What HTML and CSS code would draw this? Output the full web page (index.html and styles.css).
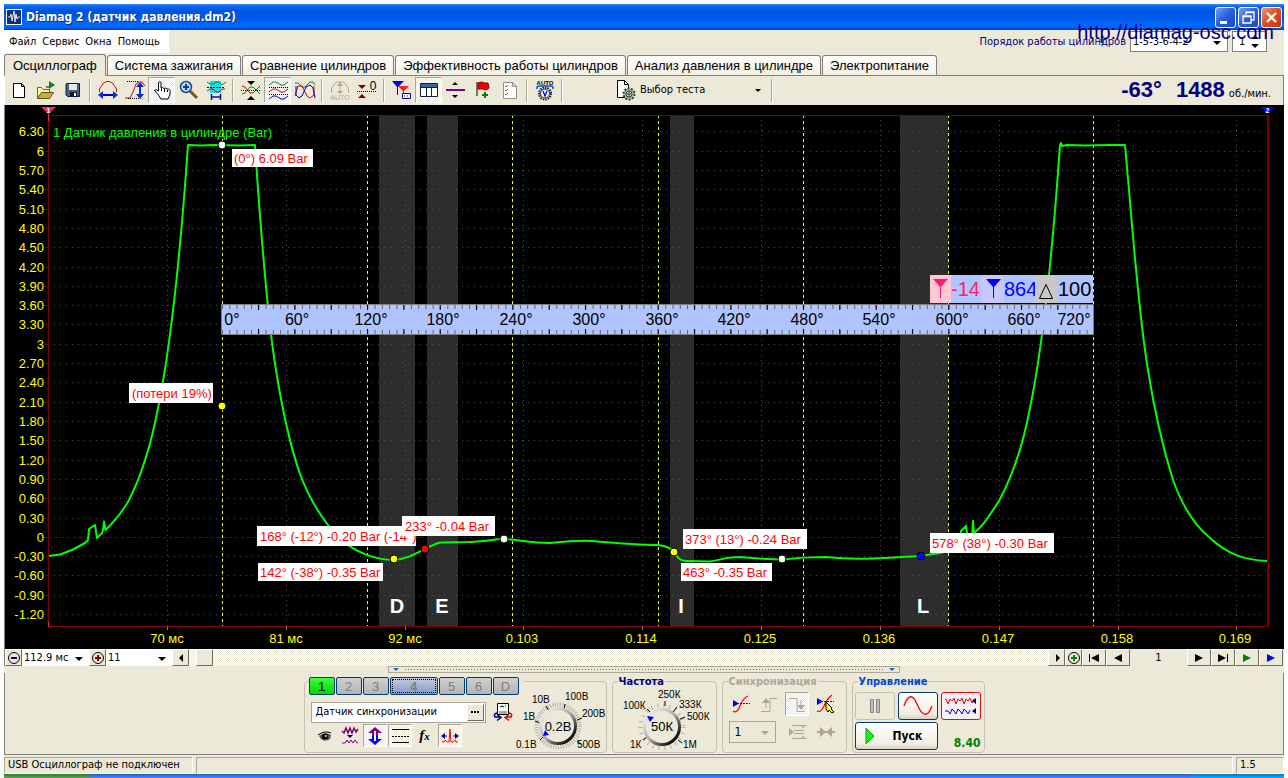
FILE: index.html
```html
<!DOCTYPE html>
<html lang="ru">
<head>
<meta charset="utf-8">
<title>Diamag 2</title>
<link rel="stylesheet" href="styles.css">
</head>
<body>
<div class="window">
  <header class="titlebar">
    <svg class="app-icon" width="16" height="16" viewBox="0 0 16 16"><rect x=".5" y=".5" width="15" height="15" fill="#10307c" stroke="#fff"/><path d="M2 8h2l1-3 1 7 2-10 1 11 1-8 1 5 1-2h2" fill="none" stroke="#dbe8ff"/></svg>
    <h1 class="title">Diamag 2 (датчик давления.dm2)</h1>
    <div class="win-buttons">
      <button class="win-btn" aria-label="Свернуть"><svg width="19" height="19" viewBox="0 0 19 19"><path d="M4 13h7v3H4z" fill="#fff"/></svg></button>
      <button class="win-btn" aria-label="Восстановить"><svg width="19" height="19" viewBox="0 0 19 19"><path d="M7 7V4h8v8h-3M7 4.500h8M4 8h8v7H4zM4 8.500h8" fill="none" stroke="#fff" stroke-width="1.300"/></svg></button>
      <button class="win-btn close" aria-label="Закрыть"><svg width="19" height="19" viewBox="0 0 19 19"><path d="M5 5l9 9M14 5l-9 9" stroke="#fff" stroke-width="2.300"/></svg></button>
    </div>
  </header>

  <div class="menu-row">
    <nav class="menu">
      <button>Файл</button><button>Сервис</button><button>Окна</button><button>Помощь</button>
    </nav>
    <div class="order">
      <label for="order">Порядок работы цилиндров</label>
      <span class="drop boxed"><select id="order" class="order-select"><option>1-5-3-6-4-2</option></select></span>
      <span class="spin"><input type="text" value="1" aria-label="Номер цилиндра"><svg width="9" height="16" viewBox="0 0 9 16"><path d="M0 5l4-4 4 4zM0 10h8l-4 4z"/></svg></span>
    </div>
    <a class="site" href="#">http://diamag-osc.com</a>
  </div>

  <div class="tabs" role="tablist">
    <button class="tab active" role="tab">Осциллограф</button>
    <button class="tab" role="tab">Система зажигания</button>
    <button class="tab" role="tab">Сравнение цилиндров</button>
    <button class="tab" role="tab">Эффективность работы цилиндров</button>
    <button class="tab" role="tab">Анализ давления в цилиндре</button>
    <button class="tab" role="tab">Электропитание</button>
  </div>

  <div class="toolbar">
    <button class="tool" aria-label="Новый"><svg viewBox="0 0 22 22"><path d="M5.500 4.500h8l3 3v11h-11zM13.500 4.500v3h3" fill="#fff" stroke="#000"/></svg></button>
    <button class="tool" aria-label="Открыть"><svg viewBox="0 0 22 22"><path d="M2.500 19.500v-11h4l2 2h6v3" fill="#fff7a0" stroke="#6a6414"/><path d="M2.500 19.500l4-6h12l-4 6z" fill="#c0b040" stroke="#5a5410"/><path d="M11 8h4" stroke="#000"/><path d="M14 2l6 4-6 4z" fill="#008a18"/></svg></button>
    <button class="tool" aria-label="Сохранить"><svg viewBox="0 0 22 22"><path d="M5 4.500h12.500v13h-12l-1.500-1.500v-11z" fill="#50607e" stroke="#101c40"/><path d="M7 5h8v6H7z" fill="#dce8f8"/><path d="M8 13h7v4H8z" fill="#101828"/><path d="M12 14h2v3h-2z" fill="#fff"/></svg></button>
    <i class="sep"></i>
    <button class="tool" aria-label="Масштаб по горизонтали"><svg viewBox="0 0 22 22"><path d="M2.500 13V10l4-6 3-1.500h3l3 1.500 4 6v3" fill="none" stroke="#e00000"/><path d="M3 16h16" stroke="#0000d0" stroke-width="2"/><path d="M1 16l5-4v8zM21 16l-5-4v8z" fill="#0030e0"/></svg></button>
    <button class="tool" aria-label="Масштаб по вертикали"><svg viewBox="0 0 22 22"><path d="M1 19h5l3-6 3-8 3-2h3l3 4" fill="none" stroke="#e00000"/><path d="M3 2.500h11M4 19.500h11" stroke="#000" stroke-dasharray="1 1"/><path d="M16 6v11" stroke="#0030e0" stroke-width="2"/><path d="M16 3l4 5h-8zM16 20l4-5h-8z" fill="#0030e0"/></svg></button>
    <button class="tool on" aria-label="Рука"><svg viewBox="0 0 22 22"><path d="M7.500 12V3.500q1.500-2 2.500 0V9q1.500-1.500 3 .5q1.500-1 3 .5q2-.5 3 1.500v4l-2 4.500h-7l-2.500-4-4-4.500q1-2 4 .5z" fill="#fff" stroke="#000"/><path d="M10.500 9v3M13.500 10v3M16.500 11v2" stroke="#000"/></svg></button>
    <button class="tool" aria-label="Лупа"><svg viewBox="0 0 22 22"><path d="M12 12l7 7" stroke="#80541c" stroke-width="3"/><circle cx="8" cy="8" r="5.500" fill="#b8d8f8" stroke="#204888" stroke-width="1.500"/><path d="M5 8h6M8 5v6" stroke="#123c80" stroke-width="2"/></svg></button>
    <button class="tool" aria-label="Измерение"><svg viewBox="0 0 22 22"><path d="M5 2h11v12H5z" fill="#00e8f0"/><path d="M2 3l3 2h3l3-2h3l3 3 4-3" fill="none" stroke="#008820"/><path d="M2 8.500h18" stroke="#000" stroke-dasharray="2 1"/><path d="M2 12l3-2h3l3 3h3l3-3h3" fill="none" stroke="#e00000"/><path d="M6.500 15v6M15.500 15v6M7 18h8" stroke="#0010a0" stroke-width="1.500"/></svg></button>
    <i class="sep"></i>
    <button class="tool" aria-label="Совместить"><svg viewBox="0 0 22 22"><path d="M2 15l3-1 5-6h3l7 7" fill="none" stroke="#008820"/><path d="M2 7l3 1 5 6h3l7-7" fill="none" stroke="#e00000"/><path d="M1 11.500h20" stroke="#000" stroke-dasharray="1 1"/><path d="M7 2h8l-4 4zM7 21h8l-4-4z"/></svg></button>
    <button class="tool on" aria-label="Разнести"><svg viewBox="0 0 22 22"><path d="M2 6l4-3h3l5 3h3l4-3" fill="none" stroke="#008820"/><path d="M2 13l4-3h3l5 3h3l4-3" fill="none" stroke="#e00000"/><path d="M2 20l4-3h3l5 3h3l4-3" fill="none" stroke="#0000e0"/><path d="M2 8.500h19M2 15.500h19" stroke="#000" stroke-dasharray="1 1"/></svg></button>
    <button class="tool" aria-label="Наложить"><svg viewBox="0 0 22 22"><path d="M1 4h3l4 4h3l5-5h3l2 3" fill="none" stroke="#008820"/><path d="M1 17l3-10h4l5 10 3 2 4-3V7" fill="none" stroke="#e00000"/><path d="M2 7v9l3 3 3-2 4-9 4-2 3 3 2 10" fill="none" stroke="#0000e0"/></svg></button>
    <i class="sep"></i>
    <button class="tool" aria-label="Авто масштаб" disabled><svg viewBox="0 0 22 22"><path d="M2.500 14V9l5-6h7l5 6v5M11 5v9" fill="none" stroke="#aca899"/><path d="M11 3l3 4H8zM11 15l3-3H8z" fill="#aca899"/><text x="11" y="21" font-size="7" text-anchor="middle" fill="#aca899">AUTO</text></svg></button>
    <button class="tool" aria-label="Обнулить"><svg viewBox="0 0 22 22"><path d="M2 6h8L6 10zM2 19h8l-4-4z" fill="#800000"/><path d="M1 12.500h20" stroke="#000" stroke-dasharray="1 1"/><text x="17" y="11" font-size="12" text-anchor="middle">0</text></svg></button>
    <i class="sep"></i>
    <button class="tool" aria-label="Маркеры"><svg viewBox="0 0 22 22"><path d="M1 2h12L7 8v8H6V8z" fill="#0000f0"/><path d="M7 7h11l-5 5v6h-1v-6z" fill="#ff2020"/><path d="M11.500 14.500h8v5h-8z" fill="#fff" stroke="#0000a0"/><path d="M13 17h1M16 17h1" stroke="#000"/></svg></button>
    <button class="tool on" aria-label="Таблица"><svg viewBox="0 0 22 22"><path d="M2.500 4.500h17v13h-17zM8.500 5v12M13.500 5v12" fill="#fff" stroke="#10204c"/><path d="M3 5h16v3H3z" fill="#4060a8"/><path d="M3 8.500h16" stroke="#10204c"/></svg></button>
    <button class="tool" aria-label="Линейка"><svg viewBox="0 0 22 22"><path d="M1 11h19" stroke="#800080" stroke-width="2"/><path d="M7 6h6l-3-3zM7 16h6l-3 3z"/></svg></button>
    <button class="tool" aria-label="Добавить метку"><svg viewBox="0 0 22 22"><path d="M5 3v14" stroke="#000"/><path d="M6 4l4-1 2 1h4l1 5-3 2-3-1H6z" fill="#f00000" stroke="#800000"/><path d="M13 13v6M10 16h6" stroke="#008000" stroke-width="2"/></svg></button>
    <button class="tool" aria-label="Отчёт"><svg viewBox="0 0 22 22"><path d="M4.500 3.500h9l4 4v12h-13zM13.500 3.500v4h4" fill="#fff" stroke="#909090"/><path d="M6 7l1 1 2-2M6 11l1 1 2-2M6 15l1 1 2-2" fill="none" stroke="#707070"/></svg></button>
    <i class="sep"></i>
    <button class="tool" aria-label="Авто напряжение"><svg viewBox="0 0 22 22"><text x="11" y="6" font-size="6" font-weight="bold" text-anchor="middle">AUTO</text><path d="M3 10V8.500q0-1.500 3-1.500h10q3 0 3 1.500V10" fill="none" stroke="#0050e0" stroke-width="1.500"/><circle cx="11" cy="14.500" r="6" fill="none" stroke="#222" stroke-width="2" stroke-dasharray="1.500 1"/><circle cx="11" cy="14.500" r="4.500" fill="#fff" stroke="#222"/><path d="M9 12l2 5 2-5" fill="none" stroke="#0000f0" stroke-width="1.300"/></svg></button>
    <i class="sep"></i>
    <button class="test-select">
      <svg width="22" height="22" viewBox="0 0 22 22"><path d="M3.500 1.500h7l4 4v13h-11zM10.500 1.500v4h4" fill="#fff" stroke="#000"/><circle cx="15" cy="15" r="5.500" fill="#a8c0a8" stroke="#304030" stroke-width="2" stroke-dasharray="2 1.400"/><circle cx="15" cy="15" r="3" fill="#dfe8df" stroke="#203020"/><path d="M13 15h4M15 13v4" stroke="#204020"/></svg>
      <span>Выбор теста</span><i class="arrow"></i>
    </button>
    <i class="sep"></i>
    <output class="readout"><b>-63°</b><b>1488</b><span>об./мин.</span></output>
  </div>

  <svg class="chart" viewBox="5 105 1279 544" role="img" aria-label="Датчик давления в цилиндре">
    <g fill="#2d2d2d"><path d="M379 116h36v511h-36zM427 116h31v511h-31zM670 116h24v511h-24zM900 116h48v511h-48z"/></g>
    <g class="grid-h">
      <path d="M54 131.500H1266M54 151.500H1266M54 170.500H1266M54 189.500H1266M54 209.500H1266M54 228.500H1266M54 247.500H1266M54 267.500H1266M54 286.500H1266M54 305.500H1266M54 324.500H1266M54 344.500H1266M54 363.500H1266M54 382.500H1266M54 402.500H1266M54 421.500H1266M54 440.500H1266M54 460.500H1266M54 479.500H1266M54 498.500H1266M54 518.500H1266M54 556.500H1266M54 575.500H1266M54 595.500H1266M54 614.500H1266"/>
    </g>
    <path class="grid-v" d="M167.500 120V626M286.500 120V626M405.500 120V626M523.500 120V626M642.500 120V626M761.500 120V626M880.500 120V626M999.500 120V626M1118.500 120V626M1236.500 120V626"/>
    <path class="zero" d="M49 537.500H1267"/>
    <path class="phase" d="M222.500 115V627M367.500 115V627M512.500 115V627M658.500 115V627M803.500 115V627M948.500 115V627M1093.500 115V627"/>
    <path class="frame" d="M48.500 115.500H1268.500V626.500H48.500zM45 131.500h3M45 151.500h3M45 170.500h3M45 189.500h3M45 209.500h3M45 228.500h3M45 247.500h3M45 267.500h3M45 286.500h3M45 305.500h3M45 324.500h3M45 344.500h3M45 363.500h3M45 382.500h3M45 402.500h3M45 421.500h3M45 440.500h3M45 460.500h3M45 479.500h3M45 498.500h3M45 518.500h3M45 537.500h3M45 556.500h3M45 575.500h3M45 595.500h3M45 614.500h3"/>
    <path class="xtick" d="M167.500 627v3M286.500 627v3M405.500 627v3M523.500 627v3M642.500 627v3M761.500 627v3M880.500 627v3M999.500 627v3M1118.500 627v3M1236.500 627v3"/>
    <path d="M1267.500 116V626" stroke="#0000ff" shape-rendering="crispEdges"/>
    <path d="M48.500 114v7M48.500 622v5" stroke="#ff2060" shape-rendering="crispEdges"/>
    <path d="M41 107h15l-7.500 7z" fill="#ff2060"/><path d="M1260 107h15l-7.500 7z" fill="#0000ff"/>
    <text class="pin" x="48.500" y="113">1</text><text class="pin" x="1267.500" y="113">2</text>

    <g class="ylab">
      <text x="44" y="136">6.30</text><text x="44" y="156">6</text><text x="44" y="175">5.70</text><text x="44" y="194">5.40</text><text x="44" y="214">5.10</text><text x="44" y="233">4.80</text><text x="44" y="252">4.50</text><text x="44" y="272">4.20</text><text x="44" y="291">3.90</text><text x="44" y="310">3.60</text><text x="44" y="329">3.30</text><text x="44" y="349">3</text><text x="44" y="368">2.70</text><text x="44" y="387">2.40</text><text x="44" y="407">2.10</text><text x="44" y="426">1.80</text><text x="44" y="445">1.50</text><text x="44" y="465">1.20</text><text x="44" y="484">0.90</text><text x="44" y="503">0.60</text><text x="44" y="523">0.30</text><text x="44" y="542">0</text><text x="44" y="561">-0.30</text><text x="44" y="580">-0.60</text><text x="44" y="600">-0.90</text><text x="44" y="619">-1.20</text>
    </g>
    <g class="xlab">
      <text x="167" y="643">70 мс</text><text x="286" y="643">81 мс</text><text x="405" y="643">92 мс</text><text x="522" y="643">0.103</text><text x="641" y="643">0.114</text><text x="760" y="643">0.125</text><text x="879" y="643">0.136</text><text x="998" y="643">0.147</text><text x="1117" y="643">0.158</text><text x="1235" y="643">0.169</text>
    </g>
    <text class="channel" x="53" y="137">1 Датчик давления в цилиндре (Bar)</text>

    <path class="wave" d="M49 556L60 554.500 72 550 85 543 88 540 89 529 95 525 97 538 102 533 103 530 104 521.500 105.500 530C113 523 120 515 128 502C142 475 152 440 158 408C171 345 180 260 188 145L201 145.500 215 145 240 145.500 255 145L257 175C262 245 270 335 276 370C282 408 290 445 300 474C310 501 322 520 340 539C355 552 375 560 394 560C415 558 422 548 440 542.500L470 542C490 541 495 539 504 539C520 540 530 543 550 543C570 541 580 540 592 541C615 543 640 545 658 545C668 546 671 549 674 552C678 558 680 561 686 561L710 561.500C724 559 728 557 740 557C755 558 765 559.500 782 559.500C795 558 810 557 825 557C845 559 865 559 885 558L920 556 940 553 957 548 960 540 961 531 966 526 968 539 972 539 973 521 974 533C983 526 990 515 999 501C1013 475 1024 440 1030 408C1043 345 1052 260 1060 145L1061 143 1062 146 1067 145 1085 145.500 1110 145 1125 145L1129 190C1134 250 1142 335 1148 370C1154 408 1162 445 1173 480C1181 502 1193 524 1209 537C1228 555 1245 560 1267 561"/>

    <path d="M221.500 304.500h872v30h-872z" fill="#b0c4ff" stroke="#808080"/>
    <g stroke="#606880" stroke-dasharray="1 6.266" stroke-width="4"><path d="M222 307H1093M222 332H1093"/></g>
    <g stroke="#000" stroke-dasharray="1 35.330" stroke-width="5"><path d="M258 307.500H1090M258 331.500H1090"/></g>
    <g class="ruler">
      <text x="232" y="325">0°</text><text x="297" y="325">60°</text><text x="371" y="325">120°</text><text x="443" y="325">180°</text><text x="516" y="325">240°</text><text x="589" y="325">300°</text><text x="662" y="325">360°</text><text x="734" y="325">420°</text><text x="807" y="325">480°</text><text x="879" y="325">540°</text><text x="952" y="325">600°</text><text x="1024" y="325">660°</text><text x="1074" y="325">720°</text>
    </g>
    <path d="M930 275h163v28H930z" fill="#b0c4ff"/><path d="M930 275h21v28h-21z" fill="#ffc8d4"/><path d="M982 275h22v28h-22z" fill="#c8c8ff"/>
    <g class="cursor-text"><text x="951" y="296" fill="#ff2060">-14</text><text x="1004" y="296" fill="#0000ff">864</text></g>
    <path d="M1035 275h22v28h-22z" fill="#c8c8c8"/>
    <text class="cursor-text" x="1058" y="296">100</text>
    <path d="M933 279h15l-7 8v11h-1v-11z" fill="#ff2060"/><path d="M986 279h15l-7 8v11h-1v-11z" fill="#0000ff"/><path d="M1039.500 298.500l6.500-14 6.500 14z" fill="none" stroke="#000"/>

    <g class="note">
      <path d="M232 149h81v18h-81zM129 383h84v20h-84zM257 526h159v20H257zM258 563h125v18H258zM402 516h93v20h-93zM683 529h124v20H683zM681 563h91v18h-91zM930 533h124v20H930z"/>
      <text x="234" y="163">(0°) 6.09 Bar</text><text x="132" y="398">(потери 19%)</text><text x="260" y="541">168° (-12°) -0.20 Bar (-14°)</text><text x="260" y="577">142° (-38°) -0.35 Bar</text>
      <path d="M402 516h93v20h-93z"/>
      <text x="405" y="531">233° -0.04 Bar</text><text x="685" y="544">373° (13°) -0.24 Bar</text><text x="683" y="577">463° -0.35 Bar</text><text x="932" y="548">578° (38°) -0.30 Bar</text>
    </g>
    <g stroke="#000"><g fill="#fff"><circle cx="222" cy="145" r="4"/><circle cx="504" cy="539" r="4"/><circle cx="782" cy="559" r="4"/></g><g fill="#ff0"><circle cx="222" cy="406" r="4"/><circle cx="394" cy="559" r="4"/><circle cx="674" cy="552" r="4"/></g><circle cx="425" cy="549" r="4" fill="red"/><circle cx="921" cy="556" r="4" fill="#00f"/></g>
    <g class="zone"><text x="397" y="613">D</text><text x="442" y="613">E</text><text x="681" y="613">I</text><text x="923" y="613">L</text></g>
  </svg>

  <div class="scrollrow">
    <button class="sq" aria-label="Уменьшить"><svg viewBox="0 0 16 16"><circle cx="8" cy="8" r="5.500" fill="none" stroke="#000"/><path d="M5 8h6" stroke="#000080" stroke-width="2"/></svg></button>
    <span class="drop"><select class="time-select" aria-label="Длительность"><option>112.9 мс</option></select></span>
    <button class="sq" aria-label="Увеличить"><svg viewBox="0 0 16 16"><circle cx="8" cy="8" r="5.500" fill="none" stroke="#000"/><path d="M5 8h6M8 5v6" stroke="#800000" stroke-width="2"/></svg></button>
    <span class="drop"><select class="step-select" aria-label="Шаг"><option>11</option></select></span>
    <button class="sq" aria-label="Влево"><svg viewBox="0 0 16 16"><path d="M10 4v8L6 8z"/></svg></button>
    <input class="scroll" type="range" min="0" max="1000" value="8" aria-label="Прокрутка">
    <button class="sq" aria-label="Вправо"><svg viewBox="0 0 16 16"><path d="M7 4v8l4-4z"/></svg></button>
    <button class="sq" aria-label="Добавить кадр"><svg viewBox="0 0 16 16"><circle cx="8" cy="8" r="5.500" fill="none" stroke="#000"/><path d="M5 8h6M8 5v6" stroke="#008000" stroke-width="2"/></svg></button>
    <button class="sq wide" aria-label="Первый"><svg viewBox="0 0 16 16"><path d="M3 4h1v8H3zM13 4v8L5 8z"/></svg></button>
    <button class="sq wide" aria-label="Предыдущий"><svg viewBox="0 0 16 16"><path d="M12 4v8L4 8z"/></svg></button>
    <output class="frame-no">1</output>
    <button class="sq wide" aria-label="Следующий"><svg viewBox="0 0 16 16"><path d="M4 4v8l8-4z"/></svg></button>
    <button class="sq wide" aria-label="Последний"><svg viewBox="0 0 16 16"><path d="M3 4v8l8-4zM12 4h1v8h-1z"/></svg></button>
    <button class="sq wide" aria-label="Воспроизвести"><svg viewBox="0 0 16 16"><path d="M4 4v8l8-4z" fill="#008000"/></svg></button>
    <button class="sq wide" aria-label="Воспроизвести все"><svg viewBox="0 0 16 16"><path d="M4 4v8l8-4z" fill="#00f"/></svg></button>
  </div>

  <div class="splitter"><i></i><span></span><i></i></div>

  <main class="panel">
    <section class="group inputs">
      <div class="channels">
        <button class="ch live">1</button><button class="ch">2</button><button class="ch">3</button><button class="ch current">4</button><button class="ch">5</button><button class="ch">6</button><button class="ch">D</button>
      </div>
      <div class="inputs-body">
        <div class="sensor-row">
          <span class="sensor"><input type="text" value="Датчик синхронизации" aria-label="Датчик"><button aria-label="Выбрать датчик"><svg width="9" height="3" viewBox="0 0 9 3"><path d="M0 0h2v2H0zM3 0h2v2H3zM6 0h2v2H6z"/></svg></button></span>
          <button class="plain" aria-label="Подключение"><svg width="20" height="20" viewBox="0 0 20 20"><path d="M4.500 1.500h11v11h-11z" fill="#fff" stroke="#000"/><path d="M6 9h8v3H6z" fill="#8cba8c"/><path d="M7 5l2-1 2 1M12 4h1" stroke="#000" fill="none"/><path d="M4 11q-4 1-2 4h5M4 12.500l4 3-4 3" fill="none" stroke="#000090" stroke-width="1.500"/><path d="M16 11q4 1 2 4h-5M16 12.500l-4 3 4 3" fill="none" stroke="#e00000" stroke-width="1.500"/></svg></button>
        </div>
        <div class="mode-row">
          <button class="mode" aria-label="Видимость"><svg viewBox="0 0 22 20"><path d="M5 10q6-5 12-1l-1 4q-5 3-9 0z" fill="#555"/><path d="M4 9q7-5 13-2" fill="none" stroke="#000"/><circle cx="11" cy="10.500" r="3" fill="#000"/><circle cx="12" cy="10" r="1" fill="#fff"/></svg></button>
          <button class="mode" aria-label="Сглаживание"><svg viewBox="0 0 22 20"><path d="M3 5l2 2 2-5 2 5 2-5 2 5 2-5 2 4 2-3" fill="none" stroke="#800080" stroke-width="1.500"/><path d="M8 9h6l-3 3z"/><path d="M3 17h3l2-3 2 3 2-3 2 3 2-3 2 3h1" fill="none" stroke="#800080"/></svg></button>
          <button class="mode on" aria-label="Инверсия"><svg viewBox="0 0 22 20"><path d="M11 1l7 6h-4v3H8V7H4z" fill="#800080"/><path d="M11 19l7-6h-4v-3H8v3H4z" fill="#00f"/><path d="M11 5v10" stroke="#fff" stroke-width="2"/></svg></button>
          <button class="mode on" aria-label="Уровни"><svg viewBox="0 0 22 20"><path d="M3 3.500h17M3 16.500h17" stroke="#000"/><path d="M3 10.500h17" stroke="#000" stroke-dasharray="2 1"/></svg></button>
          <button class="mode fx" aria-label="Функция"><i>f<small>x</small></i></button>
          <button class="mode on" aria-label="Интервал"><svg viewBox="0 0 22 20"><path d="M3 16h2l1-2 2 2h2l1-13 1 13h2l2-2 1 2h2" fill="none" stroke="#f00"/><path d="M3 10h5M14 10h5" stroke="#000090"/><path d="M2 10l4-3v6zM20 10l-4-3v6z" fill="#000090"/></svg></button>
        </div>
      </div>
      <svg class="knob volt" width="92" height="60" viewBox="515 690 92 60">
        <defs><linearGradient id="rim" x1="0" y1="0" x2="1" y2="1"><stop offset="0" stop-color="#fff"/><stop offset=".5" stop-color="#aaa"/><stop offset=".85" stop-color="#111"/></linearGradient></defs>
        <circle cx="558" cy="726" r="21.500" fill="none" stroke="#b4b0a4" stroke-width="4" stroke-dasharray="1 1.500"/>
        <path d="M540 740l3-3M535 721l5 2M546 706l3 5M565 704l-1 5M582 718l-5 2M577 741l4 3" stroke="#000"/>
        <circle cx="558" cy="726" r="17.500" fill="#ece9d8" stroke="url(#rim)" stroke-width="3"/>
        <path d="M543 736l2-6 4 5z" fill="#00f"/>
        <text class="val" x="558" y="731">0.2В</text>
        <g class="ticks"><text x="516" y="748">0.1В</text><text x="523" y="720">1В</text><text x="532" y="703">10В</text><text x="565" y="700">100В</text><text x="582" y="717">200В</text><text x="577" y="748">500В</text></g>
      </svg>
    </section>

    <section class="group freq">
      <h2 class="navy">Частота</h2>
      <svg class="knob" width="98" height="62" viewBox="615 688 98 62">
        <circle cx="661" cy="727" r="21.500" fill="none" stroke="#b4b0a4" stroke-width="4" stroke-dasharray="1 5"/>
        <path d="M642 740l4-3M646 709l4 4M664 701v5M676 707l-4 5M684 717l-5 2M677 740l4 3" stroke="#000"/>
        <circle cx="661" cy="727" r="17.500" fill="#ece9d8" stroke="url(#rim)" stroke-width="3"/>
        <path d="M646 716l7 1-4 5z" fill="#00f"/>
        <text class="val" x="661" y="731">50К</text>
        <g class="ticks"><text x="629" y="748">1К</text><text x="622" y="709">100К</text><text x="657" y="698">250К</text><text x="678" y="708">333К</text><text x="686" y="720">500К</text><text x="682" y="748">1М</text></g>
      </svg>
    </section>

    <section class="group sync">
      <h2 class="dim">Синхронизация</h2>
      <div class="sync-row">
        <button class="plain" aria-label="По сигналу"><svg width="20" height="20" viewBox="0 0 20 20"><path d="M2 17q4 3 7-5t8-10" fill="none" stroke="#f00" stroke-width="1.300"/><path d="M3 9.500h16" stroke="#00f" stroke-dasharray="2 1"/><path d="M2 6l6 3.500-6 3.500z" fill="#00f"/></svg></button>
        <button class="plain" aria-label="Передний фронт"><svg width="20" height="20" viewBox="0 0 20 20"><path d="M2 17.500h9V4.500h7M7 14V6" fill="none" stroke="#aca899"/><path d="M3 9l4-5 4 5z" fill="#aca899"/></svg></button>
        <button class="plain on" aria-label="Задний фронт"><svg width="20" height="20" viewBox="0 0 20 20"><path d="M2 4.500h8v13h8M14 6v8" fill="none" stroke="#aca899"/><path d="M10 11l4 5 4-5z" fill="#aca899"/></svg></button>
        <button class="plain" aria-label="Выбор уровня"><svg width="20" height="20" viewBox="0 0 20 20"><path d="M2 17q4 2 7-5t8-11" fill="none" stroke="#f00" stroke-width="1.300"/><path d="M3 7.500h16" stroke="#00f" stroke-dasharray="2 1"/><path d="M2 4l6 3.500-6 3.500z" fill="#00f"/><path d="M11 8l6 6-1 1 3 3-2 1-3-3-1 2-2-3z" fill="#ff0" stroke="#000"/></svg></button>
      </div>
      <div class="sync-row">
        <span class="drop flat"><select class="sync-select" aria-label="Канал"><option>1</option></select></span>
        <button class="plain" aria-label="Полоса"><svg width="20" height="20" viewBox="0 0 20 20"><path d="M4 3.500h15M4 16.500h15M6 8.500h10M6 11.500h10" stroke="#aca899"/><path d="M1 6l5 4-5 4zM12 3h6l-3 3zM12 17h6l-3-3z" fill="#aca899"/></svg></button>
        <button class="plain" aria-label="Центр"><svg width="20" height="20" viewBox="0 0 20 20"><path d="M1 10h18" stroke="#aca899" stroke-width="2"/><path d="M4 5l6 5-6 5zM16 5l-6 5 6 5z" fill="#aca899"/></svg></button>
      </div>
    </section>

    <section class="group control">
      <h2 class="blue">Управление</h2>
      <div class="control-grid">
        <button class="big off" aria-label="Пауза" disabled><svg width="16" height="16" viewBox="0 0 16 16"><path d="M3.500 1.500h3v13h-3zM9.500 1.500h3v13h-3z" fill="#bbb" stroke="#888"/></svg></button>
        <button class="big" aria-label="Один сигнал"><svg width="30" height="20" viewBox="0 0 30 20"><path d="M1 10C5-2 10-2 14 8S24 24 29 10" fill="none" stroke="#f00" stroke-width="1.300"/></svg></button>
        <button class="big red" aria-label="Запись"><svg width="34" height="22" viewBox="0 0 34 22"><path d="M1 4h1l2 5 2-5 2 2 2-3 2 6 2-5 2 2 2-3 2 6 2-5 2 2 2-3 2 5 2-4" fill="none" stroke="#f00"/><path d="M1 16h3l2 3 2-5 2 2 2 3 2-5 2 2 2 3 2-5 2 2 2 3 2-4" fill="none" stroke="#00f"/><path d="M32 3v6l-4-3zM32 13v6l-4-3z" fill="#000080"/></svg></button>
        <button class="big start"><svg width="10" height="18" viewBox="0 0 10 18"><path d="M1 1l8 8-8 8z" fill="#0f0" stroke="#3a8a3a"/></svg><b>Пуск</b></button>
        <b class="version">8.40</b>
      </div>
    </section>
  </main>

  <footer class="status"><span>USB Осциллограф не подключен</span><span></span><span>1.5</span></footer>
</div>
<div class="taskbar"><i></i><i></i></div>
</body>
</html>
```
FILE: styles.css
```css
* { box-sizing: border-box; }
html, body { margin: 0; }
body {
  background: #fff;
  font: 11px/14px "DejaVu Sans Condensed", "Liberation Sans", sans-serif;
  color: #000;
  padding-top: 4px;
}
button, input, select { font: inherit; color: inherit; margin: 0; padding: 0; border: 0; border-radius: 0; background: none; }
button { display: flex; align-items: center; justify-content: center; white-space: nowrap; }
i { font-style: normal; }
svg { display: block; flex: none; }

.window { margin: 0 4px; background: #ece9d8; display: flex; flex-direction: column; }

.titlebar {
  height: 26px; display: flex; align-items: center; gap: 4px; padding: 0 2px;
  background: linear-gradient(#3a90ff 0, #0a68f0 8%, #0055e0 25%, #0058e8 50%, #0068ff 75%, #0064f8 90%, #0040b8 100%);
}
.title { flex: 1; margin: 0; font: bold 12px/20px "DejaVu Sans Condensed", sans-serif; color: #fff; text-shadow: 1px 1px #0a2a80; }
.win-buttons { display: flex; gap: 2px; }
.win-btn { width: 21px; height: 21px; border: 1px solid #fff; border-radius: 3px; background: linear-gradient(135deg, #7aa0f0, #2a5cd8 50%, #2048c8); }
.win-btn.close { background: linear-gradient(135deg, #f09078, #dc4c24 50%, #c03810); }

.menu-row { position: relative; height: 24px; display: flex; justify-content: space-between; align-items: flex-start; }
.menu { height: 23px; display: flex; gap: 6px; padding: 0 9px 0 5px; background: #fff; }
.order { display: flex; align-items: center; gap: 4px; padding: 1px 17px 0 0; color: #000080; }
.drop { position: relative; display: flex; background: #fff; color: #000; }
.drop select { appearance: none; height: 17px; padding: 0 16px 0 2px; outline: 0; }
.drop::after { content: ""; position: absolute; right: 6px; top: 50%; margin-top: -1px; border: 4px solid transparent; border-top-color: #000; border-bottom: 0; pointer-events: none; }
.drop.boxed { border: 1px solid #808080; }
.drop .order-select { width: 96px; height: 19px; }
.spin { width: 35px; height: 21px; display: flex; align-items: center; border: 1px solid #808080; background: #fff; color: #000; padding: 0 6px; }
.spin input { width: 100%; min-width: 0; }
.site { position: absolute; right: 10px; top: -8px; font: 20px/20px "Liberation Sans", sans-serif; color: #000080; text-decoration: none; }

.tabs { height: 22px; display: flex; align-items: flex-end; gap: 1px; border-bottom: 1px solid #808080; font: 13px/18px "Liberation Sans", sans-serif; }
.tab { height: 20px; padding: 0 7px; border: 1px solid #808080; border-bottom: 0; border-radius: 3px 3px 0 0; background: linear-gradient(#fff, #f2f0e4); }
.tab.active { height: 22px; margin-bottom: -1px; padding: 0 8px; background: #ece9d8; }

.toolbar { height: 29px; display: flex; align-items: center; padding: 0 12px 1px 0; border-right: 1px solid #808080; border-left: 1px solid #fff; }
.tool { width: 27px; height: 26px; }
.tool svg { width: 22px; height: 22px; font-family: "Liberation Sans", sans-serif; }
.on { background: repeating-conic-gradient(#fff 0 25%, #ece9d8 0 50%) 0 0 / 2px 2px; border: 1px solid; border-color: #aca899 #fff #fff #aca899; }
.sep { width: 2px; height: 23px; margin: 0 3px; border-left: 1px solid #aca899; border-right: 1px solid #fff; flex: none; }
.test-select { width: 202px; justify-content: flex-start; gap: 4px; padding: 0 7px 0 48px; }
.arrow { margin-left: auto; border: 3px solid transparent; border-top-color: #000; border-bottom: 0; }
.readout { margin-left: auto; display: flex; align-items: baseline; color: #000; font-family: "Liberation Sans", sans-serif; }
.readout b { font-size: 22px; line-height: 24px; color: #000080; margin-right: 4px; }
.readout b:first-child { margin-right: 14px; }
.readout span { font-family: "DejaVu Sans Condensed", sans-serif; }

.chart { width: 100%; height: auto; background: #000; font: 13px "Liberation Sans", sans-serif; border-left: 1px solid #808080; }
.grid-h, .grid-v, .zero, .phase, .frame, .xtick { fill: none; shape-rendering: crispEdges; }
.grid-h { stroke: #505050; stroke-dasharray: 1 5; }
.grid-v { stroke: #505050; stroke-dasharray: 1 4; }
.zero { stroke: #800000; stroke-dasharray: 3 3; }
.phase { stroke: #ff0; stroke-dasharray: 3 3; }
.frame { stroke: #800000; }
.xtick { stroke: #808080; }
.pin { font: bold 7px "Liberation Sans", sans-serif; fill: #fff; text-anchor: middle; }
.ylab { fill: #ff0; text-anchor: end; }
.xlab { fill: #ff0; text-anchor: middle; }
.channel { fill: #0f0; }
.wave { fill: none; stroke: #0f0; stroke-width: 2; stroke-linejoin: round; }
.ruler { font-size: 16px; text-anchor: middle; }
.cursor-text { font-size: 20px; }
.note { fill: #fff; }
.note text { fill: #f00; }
.zone { font: bold 20px "Liberation Sans", sans-serif; fill: #fff; text-anchor: middle; }

.scrollrow { height: 17px; display: flex; border-left: 1px solid #808080; padding-right: 1px; }
.sq { width: 17px; height: 17px; flex: none; border: 1px solid; border-color: #fff #716f64 #716f64 #fff; background: #ece9d8; }
.sq.wide { width: 24px; }
.sq svg { width: 16px; height: 16px; }
.time-select { width: 67px; }
.step-select { width: 66px; }
.frame-no { width: 57px; text-align: center; line-height: 17px; }
.scroll { appearance: none; flex: 1; min-width: 0; height: 17px; background: repeating-conic-gradient(#fff 0 25%, #ece9d8 0 50%) 0 0 / 2px 2px; }
.scroll::-webkit-slider-thumb { appearance: none; width: 17px; height: 17px; background: #ece9d8; border: 1px solid; border-color: #fff #716f64 #716f64 #fff; }

.splitter { width: 40%; height: 7px; align-self: center; display: flex; align-items: center; gap: 6px; padding: 0 4px; border: 1px solid #aca899; }
.splitter i { border: 3px solid transparent; border-top-color: #2860d0; border-bottom: 0; }
.splitter span { flex: 1; height: 1px; background: repeating-linear-gradient(90deg, #4878d0 0 1px, transparent 1px 3px); }

.panel { display: flex; justify-content: center; gap: 5px; padding: 8px 0 1px; border-bottom: 1px solid #808080; border-left: 1px solid #808080; border-right: 1px solid #808080; }
.group { height: 72px; border: 1px solid #c5c2b2; border-radius: 4px; }
.group h2 { width: max-content; margin: -7px 0 0 5px; padding: 0 1px; background: #ece9d8; font: bold 11px/13px "DejaVu Sans Condensed", sans-serif; }
.navy { color: #000080; }
.dim { color: #aca899; }
.blue { color: #0046d5; }

.inputs { width: 303px; display: grid; grid-template-columns: 210px 91px; grid-template-rows: 14px 1fr; }
.channels { grid-row: 1; width: 215px; height: 19px; margin: -5px 0 0 4px; display: flex; gap: 1px; background: #ece9d8; font: 13px/15px "Liberation Sans", sans-serif; }
.ch { width: 26px; height: 18px; border: 1px solid #003c74; border-radius: 2px; background: linear-gradient(#d0d0d0, #b4b4b4); color: #808080; }
.ch.live { background: linear-gradient(#3cff3c, #00d800); color: #000; }
.ch.current { width: 48px; background: linear-gradient(#c4cce0, #8498c4); outline: 1px dotted #000; outline-offset: -3px; font-weight: bold; }
.inputs-body { grid-row: 2; }
.sensor-row { display: flex; align-items: center; gap: 5px; padding: 4px 0 0 6px; }
.sensor { width: 177px; height: 21px; display: flex; border: 1px solid #aca899; background: #fff; }
.sensor input { flex: 1; min-width: 0; padding-left: 4px; }
.sensor button { width: 17px; height: 17px; margin: 1px; border: 1px solid; border-color: #fff #716f64 #716f64 #fff; background: #ece9d8; }
.mode-row { display: flex; gap: 1px; padding: 0 0 0 8px; }
.mode { width: 24px; height: 23px; }
.mode svg { width: 22px; height: 20px; }
.fx i { font: italic bold 15px/18px "Liberation Serif", serif; }
.fx small { font-size: 11px; }
.knob { grid-column: 2; grid-row: 1 / 3; margin-top: 8px; font: 10px "Liberation Sans", sans-serif; }
.knob .val { font-size: 13px; text-anchor: middle; }
.freq { width: 105px; }
.freq .knob { margin: 0 0 0 3px; }
.sync { width: 125px; }
.sync-row { display: flex; gap: 4px; padding: 4px 0 0 6px; }
.plain { width: 24px; height: 24px; }
.drop.flat { border: 1px solid #aca899; background: #ece9d8; margin-right: 6px; height: 22px; align-self: center; }
.drop.flat::after { border-top-color: #aca899; }
.sync-select { width: 45px; font-size: 12px; }
.drop.flat .sync-select { height: 20px; padding-left: 5px; }
.control { width: 133px; }
.control-grid { display: grid; grid-template-columns: 40px 40px 40px; gap: 2px 3px; padding: 4px 0 0 2px; }
.big { height: 28px; border: 1px solid #003c74; border-radius: 3px; background: linear-gradient(#fff, #f0eee4 80%, #d8d0c0); }
.big.off { border-color: #c5c2b2; background: #ece9d8; }
.big.red { border: 1px solid #f00; background: #f4f2f8; }
.start { grid-column: 1 / 3; justify-content: flex-start; gap: 18px; padding-left: 9px; }
.start b { font: bold 12px/16px "DejaVu Sans Condensed", sans-serif; }
.version { align-self: end; justify-self: end; color: #008000; font-size: 12px; }

.status { height: 19px; display: flex; gap: 3px; padding: 2px 0 0; }
.status span { border: 1px solid; border-color: #aca899 #fff #fff #aca899; padding-left: 3px; }
.status span:nth-child(1) { width: 189px; }
.status span:nth-child(2) { flex: 1; }
.status span:nth-child(3) { width: 48px; }
.taskbar { height: 4px; margin: 0 4px; display: flex; justify-content: space-between; background: linear-gradient(#2058c8, #4890f0); }
.taskbar i:first-child { width: 85px; background: linear-gradient(#2c7c2c, #58a858); }
.taskbar i:last-child { width: 93px; background: linear-gradient(#0870c8, #18b0f0); }
```
